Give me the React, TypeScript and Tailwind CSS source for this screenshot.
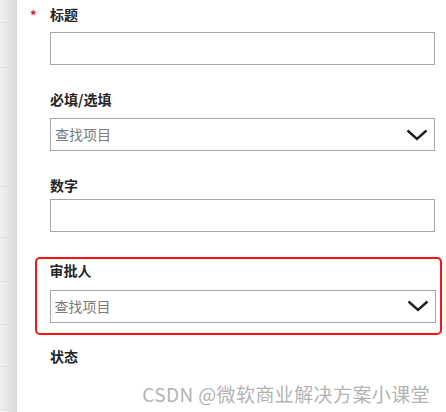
import { ReactNode } from 'react';

const font = { fontFamily: '"Noto Sans CJK SC", "Liberation Sans", sans-serif' };

// rows of the list that is peeking out behind the panel
const stripRows = [23, 45, 119, 51, 44, 43, 42, 43];

function Chevron() {
  return (
    <svg width="22" height="12" viewBox="0 0 22 12" fill="none">
      <path d="M1.5 1.5 L11 10 L20.5 1.5" stroke="#1f1f1f" strokeWidth="2.4" strokeLinejoin="miter" />
    </svg>
  );
}

function TextBox() {
  return <div className="h-[33px] border border-[#a6a6a6] bg-white" />;
}

function LookupBox() {
  return (
    <div className="h-[33px] border border-[#a6a6a6] bg-white flex items-center justify-between pl-[4px] pr-[6px]">
      <span className="text-[14px] text-[#7a7a7a]">查找项目</span>
      <Chevron />
    </div>
  );
}

function Label({ children, required }: { children: ReactNode; required?: boolean }) {
  return (
    <div className="relative h-[20px] leading-[20px] text-[14px] font-bold text-[#252423]">
      {required && (
        <span className="absolute -left-[20px] top-[1px] text-[13px] font-bold text-[#e8112d]">*</span>
      )}
      {children}
    </div>
  );
}

export default function App() {
  return (
    <div className="w-[446px] h-[412px] flex bg-white overflow-hidden" style={font}>
      <div className="w-[17px] shrink-0 flex flex-col bg-gradient-to-r from-[#f1f1f1] to-[#d9d9d9]">
        {stripRows.map((h, i) => (
          <div key={i} className="border-b border-[#dedede]" style={{ height: h }} />
        ))}
      </div>

      <div className="flex-1 flex flex-col pl-[18px] pr-[4px]">
        <div className="mt-[2px] border-2 border-transparent pl-[13px] pr-[5px]">
          <Label required>标题</Label>
          <div className="mt-[8px]">
            <TextBox />
          </div>
        </div>

        <div className="mt-[20px] border-2 border-transparent pl-[13px] pr-[5px]">
          <Label>必填/选填</Label>
          <div className="mt-[9px]">
            <LookupBox />
          </div>
        </div>

        <div className="mt-[20px] border-2 border-transparent pl-[13px] pr-[5px]">
          <Label>数字</Label>
          <div className="mt-[4px]">
            <TextBox />
          </div>
        </div>

        <div className="mt-[23px] border-[2.5px] border-[#ff1010] rounded-[5px] pt-[0.5px] pb-[10.5px] pl-[12.5px] pr-[4.5px]">
          <Label>审批人</Label>
          <div className="mt-[10px]">
            <LookupBox />
          </div>
        </div>

        <div className="mt-[9px] border-2 border-transparent pl-[13px] pr-[5px]">
          <Label>状态</Label>
        </div>

        <div className="mt-[14px] pr-[12px] flex justify-end">
          <span className="text-[19px] leading-[24px] text-[#b3b3b3] tracking-[0.4px]">CSDN @微软商业解决方案小课堂</span>
        </div>
      </div>
    </div>
  );
}
